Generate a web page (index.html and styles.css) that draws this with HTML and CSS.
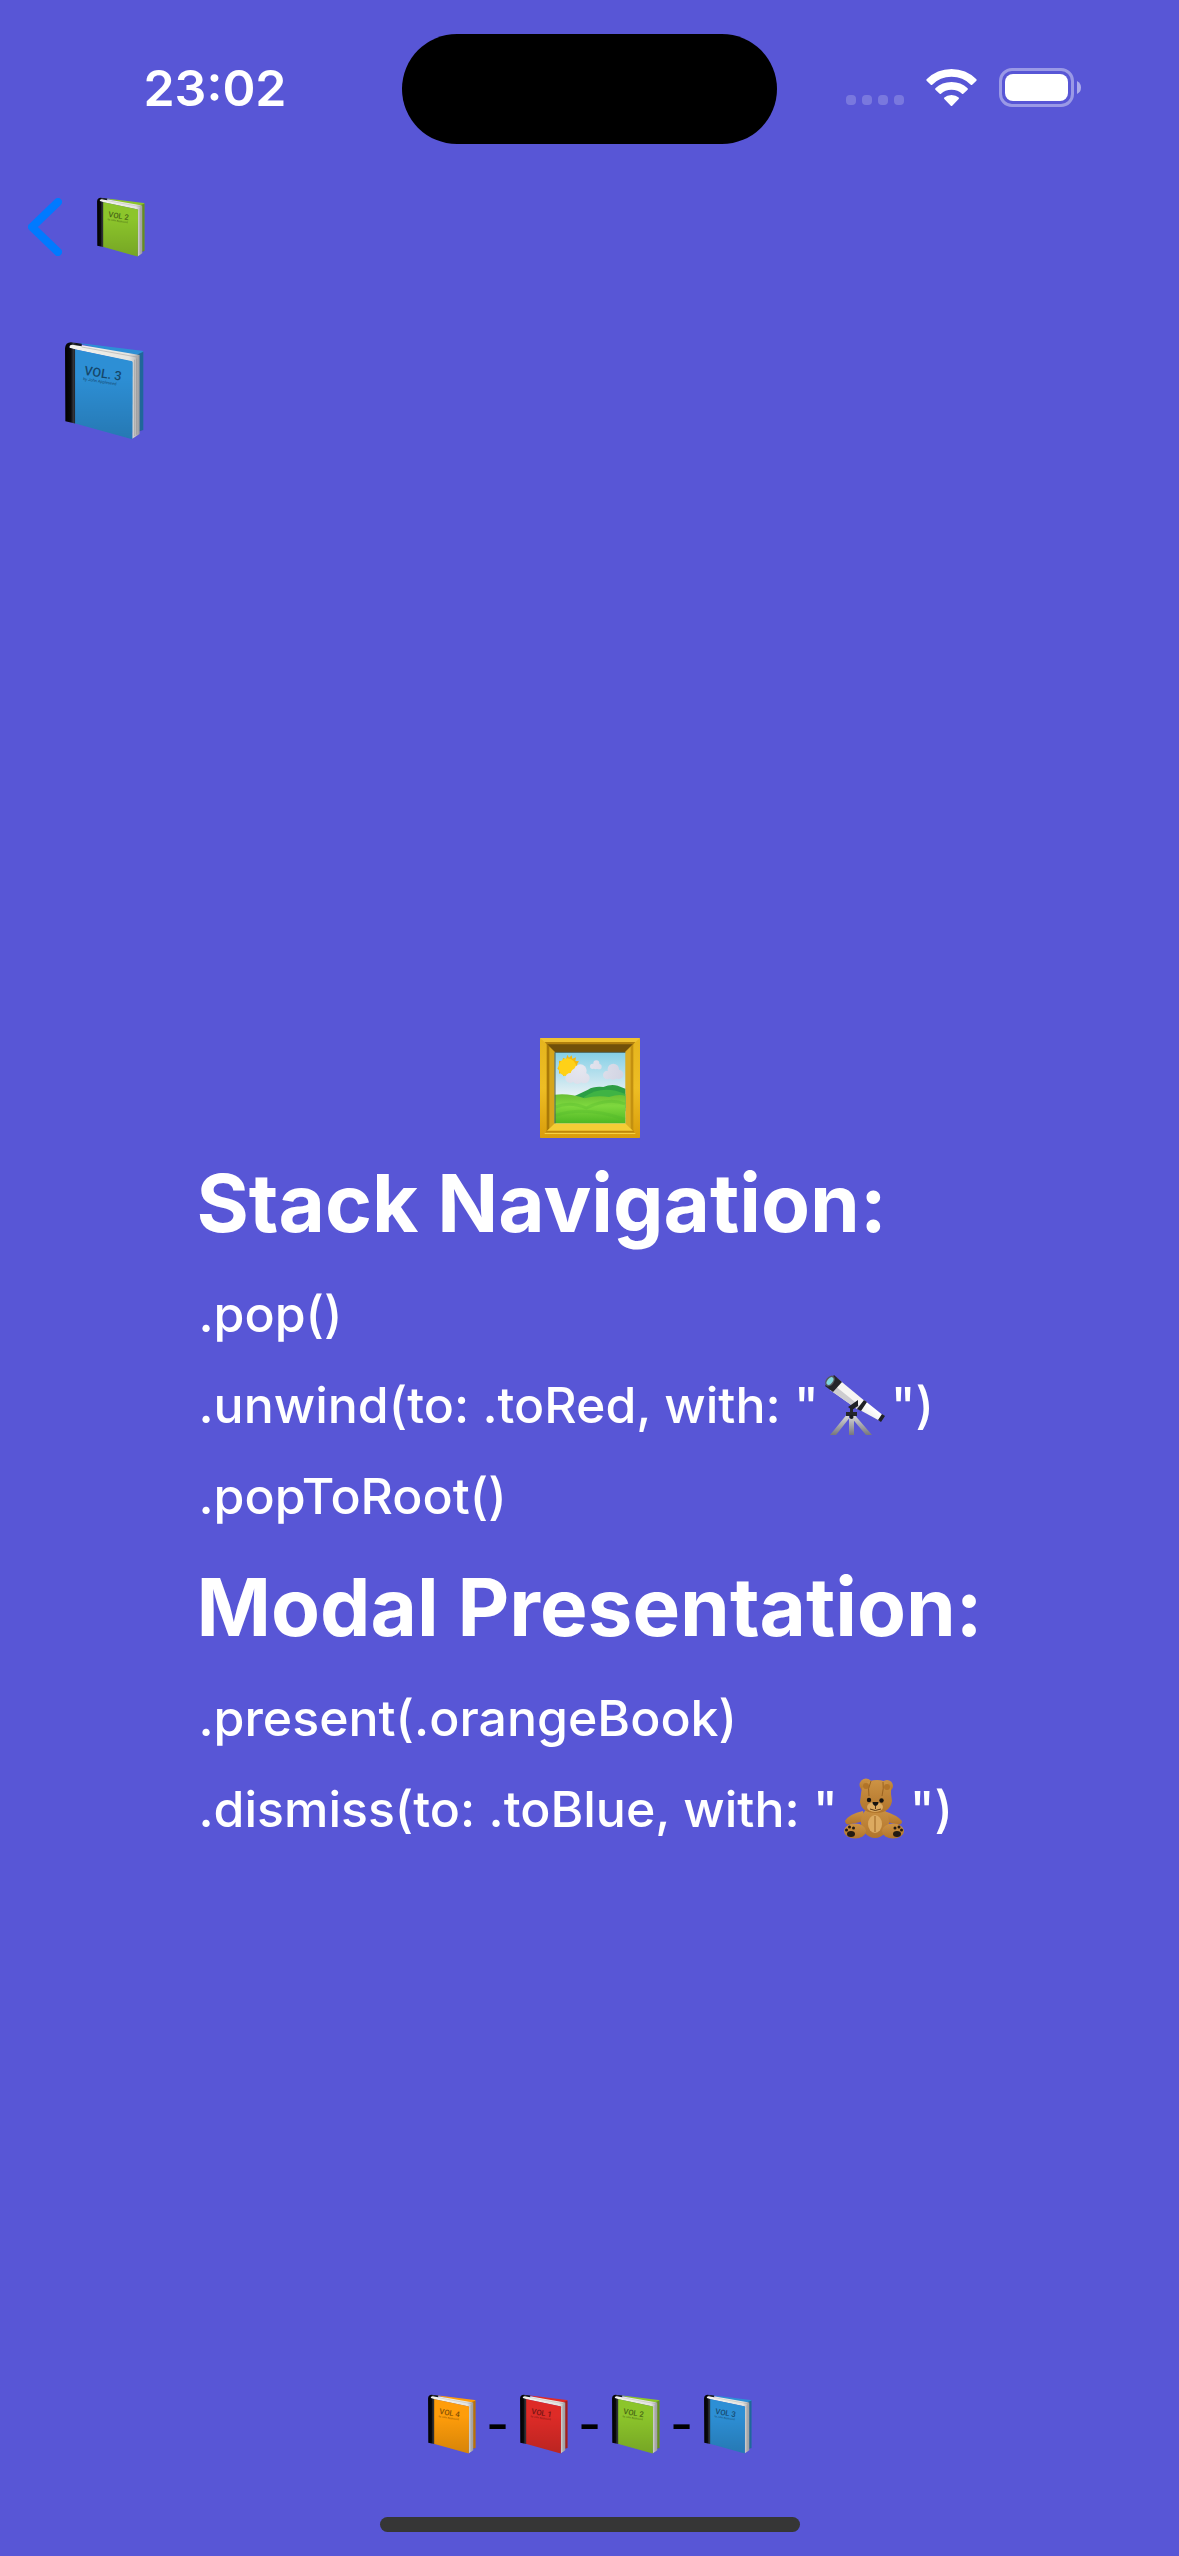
FILE: index.html
```html
<!DOCTYPE html>
<html lang="en">
<head>
<meta charset="utf-8">
<meta name="viewport" content="width=device-width, initial-scale=1">
<title>Blue Book</title>
<link rel="stylesheet" href="styles.css">
</head>
<body>
<svg class="defs" aria-hidden="true">
  <defs>
    <linearGradient id="pages" x1="0" y1="0" x2="1" y2="0"><stop offset="0" stop-color="#f4f4ee"/><stop offset=".85" stop-color="#e4e4e0"/><stop offset=".93" stop-color="#c6c6c6"/><stop offset="1" stop-color="#97979b"/></linearGradient>
    <linearGradient id="shade" x1="0" y1="0" x2="0" y2="1"><stop offset=".3" stop-color="#000" stop-opacity="0"/><stop offset="1" stop-color="#000" stop-opacity=".16"/></linearGradient>
    <linearGradient id="spine" x1="0" y1="0" x2="1" y2="0"><stop offset="0" stop-color="#000"/><stop offset=".35" stop-color="#0a0a0c"/><stop offset=".5" stop-color="#33363c"/><stop offset=".7" stop-color="#101216"/><stop offset="1" stop-color="#16202c"/></linearGradient>
    <symbol id="book" viewBox="0 0 236 296">
      <path d="M40 6 230 29q4 1 4 4v233l-34 6V50Z" fill="currentColor"/>
      <path d="M216 40 234 32v234l-18 6Z" fill="#000" opacity=".28"/>
      <path d="M14 12 26 8 223 42v236l-22 14V62L14 22Z" fill="url(#pages)"/>
      <path d="M50 18 215 48M208 56V284M214 52V280" fill="none" stroke="#777" stroke-width="2" opacity=".5"/>
      <path d="M28 25 198 60q4 1 4 5l-1 229L28 246Z" fill="currentColor"/>
      <path d="M28 25 198 60q4 1 4 5l-1 229L28 246Z" fill="url(#shade)"/>
      <path d="M0 22Q1 4 18 4L50 8v8L22 11q-11 1-9 9l17 5v222L1 240Z" fill="url(#spine)"/>
    </symbol>
  </defs>
</svg>

<header class="status">
  <time class="clock">23:02</time>
  <div class="island"></div>
  <div class="indicators">
    <svg class="signal" viewBox="0 0 58 10" aria-label="No signal"><g fill="#fff" opacity=".2"><rect width="10" height="10" rx="4"/><rect x="16" width="10" height="10" rx="4"/><rect x="32" width="10" height="10" rx="4"/><rect x="48" width="10" height="10" rx="4"/></g></svg>
    <svg class="wifi" viewBox="0 0 51 38" aria-label="Wi-Fi"><path fill="#fff" d="M.6 10.2Q11 0 25.500 0T50.400 10.200Q51 11 50.400 11.700L46.200 15.700Q45.500 16.300 44.800 15.700 37 7.800 25.500 7.800T6.200 15.700Q5.500 16.300 4.800 15.700L.6 11.700Q0 11 .6 10.200ZM9.400 19.300Q16 13 25.500 13T41.600 19.300Q42.200 20 41.600 20.700L37.300 24.800Q36.600 25.400 36 24.800 32 20.800 25.500 20.800T15 24.800Q14.400 25.400 13.700 24.800L9.400 20.700Q8.800 20 9.400 19.300ZM18.300 28.600Q21 26 25.500 26T32.700 28.600Q33.300 29.300 32.700 30L26.200 36.700Q25.500 37.400 24.800 36.700L18.300 30Q17.700 29.300 18.300 28.600Z"/></svg>
    <svg class="battery" viewBox="0 0 82 39" aria-label="Battery full"><rect x="1.500" y="1.500" width="72" height="36" rx="11.500" fill="none" stroke="#fff" stroke-opacity=".4" stroke-width="3"/><rect x="6" y="6" width="63" height="27" rx="8" fill="#fff"/><path d="M78 13q4 2 4 6.500T78 26Z" fill="#fff" opacity=".5"/></svg>
  </div>
</header>

<nav class="nav">
  <button class="back" type="button" aria-label="Back to green book">
    <svg class="chevron" viewBox="0 0 34 58"><path d="M30 4 4 29 30 54" fill="none" stroke="#007aff" stroke-width="8" stroke-linecap="round" stroke-linejoin="round"/></svg>
    <svg class="book green" viewBox="0 0 236 296"><use href="#book"/><g class="title" transform="translate(54 98) rotate(9)"><text class="vol">VOL 2</text><text class="by" y="16">by John Appleseed</text></g></svg>
  </button>
</nav>

<div class="volume">
  <svg class="book large blue" viewBox="0 0 236 296" role="img" aria-label="Blue book"><use href="#book"/><g class="title" transform="translate(56 101) rotate(9)"><text class="vol">VOL. 3</text><text class="by" y="16">by John Appleseed</text></g></svg>
</div>

<main class="content">
  <svg class="picture" viewBox="0 0 300 300" role="img" aria-label="Framed picture">
    <defs>
      <linearGradient id="sky" x1="0" y1="0" x2="0" y2="1"><stop offset="0" stop-color="#83cfe6"/><stop offset=".6" stop-color="#e6f0f4"/></linearGradient>
      <linearGradient id="grass" x1="0" y1="0" x2="0" y2="1"><stop offset="0" stop-color="#69bf35"/><stop offset=".4" stop-color="#7ed83e"/><stop offset="1" stop-color="#4fb824"/></linearGradient>
      <linearGradient id="gold" x1="0" y1="0" x2="0" y2="1"><stop offset="0" stop-color="#e5b41d"/><stop offset=".5" stop-color="#edbd24"/><stop offset="1" stop-color="#d99d0b"/></linearGradient>
      <radialGradient id="cloud" gradientUnits="userSpaceOnUse" cx="120" cy="85" r="240"><stop offset="0" stop-color="#e6e7f0"/><stop offset="1" stop-color="#c2c5d8"/></radialGradient>
    </defs>
    <rect width="300" height="300" rx="2" fill="url(#gold)"/>
    <path d="M0 0H300L278 20H22Z" fill="#efc132"/>
    <path d="M20 18H280L256 42H44Z" fill="#71500a"/>
    <path d="M14 12H286L280 19H20Z" fill="#b17f0d"/>
    <path d="M20 18 44 42V256L20 280Z" fill="#a97908"/>
    <path d="M280 18 256 42V256L280 280Z" fill="#c39010"/>
    <path d="M28 26 44 42V256L28 272Z" fill="#d6a51b"/>
    <path d="M272 26 256 42V256L272 272Z" fill="#dcae24"/>
    <path d="M44 256H256L280 280H20Z" fill="#f6cd35"/>
    <path d="M20 278H280L286 286H14Z" fill="#bf8809"/>
    <path d="M14 286H286" stroke="#ffdc4a" stroke-width="3"/>
    <rect x="44" y="42" width="212" height="214" fill="url(#sky)"/>
    <path d="M82 50l5 9 8-7 2 10 11-4-2 11 11 1-6 9 8 7-10 5 4 10-11-1-1 10-10-4-5 9-8-7-8 7-3-11-10 3V97l-5-6 5-6V68l10 2 2-11 9 5Z" fill="#f4b70c"/>
    <circle cx="82" cy="88" r="27" fill="#ffd117"/>
    <g fill="url(#cloud)"><circle cx="91" cy="120" r="15"/><circle cx="108" cy="107" r="16"/><circle cx="121" cy="98" r="19"/><circle cx="133" cy="120" r="16"/><circle cx="112" cy="123" r="15"/></g>
    <g fill="url(#cloud)"><circle cx="202" cy="111" r="13"/><circle cx="220" cy="94" r="17"/><circle cx="236" cy="109" r="14"/><circle cx="219" cy="112" r="13"/></g>
    <g fill="url(#cloud)"><circle cx="158" cy="85" r="8"/><circle cx="169" cy="76" r="9"/><circle cx="177" cy="86" r="8"/><circle cx="167" cy="87" r="7"/></g>
    <path d="M96 178 144 155Q162 144 190 147 213 137 233 143L256 152V220H96Z" fill="#2c9e45"/>
    <path d="M132 177Q188 138 256 168V210H132Z" fill="#3fb344"/>
    <path d="M44 170Q85 164 134 181 170 171 207 177 240 166 256 174V256H44Z" fill="url(#grass)"/>
    <path d="M46 207Q91 189 139 210 207 177 255 198M46 232Q136 202 255 244" fill="none" stroke="#4eb52c" stroke-width="9" opacity=".3"/>
    <path d="M45 256V43H256" fill="none" stroke="#4e5f50" stroke-width="3"/>
  </svg>

  <div class="actions">
    <h1 class="heading">Stack Navigation:</h1>
    <button class="action" type="button">.pop()</button>
    <button class="action" type="button">.unwind(to: .toRed, with: "<svg class="emoji" viewBox="0 0 66 62" role="img" aria-label="telescope"><defs><linearGradient id="tube" x1="1" y1="0" x2="0" y2="1"><stop offset="0" stop-color="#bbb"/><stop offset=".4" stop-color="#fff"/><stop offset="1" stop-color="#ddd"/></linearGradient><linearGradient id="leg" x1="0" y1="0" x2="0" y2="1"><stop offset="0" stop-color="#e3e3e6"/><stop offset="1" stop-color="#77777c"/></linearGradient></defs><path d="M26 39 8 61h6L29 42ZM31 39 50 61h-6L28 42ZM27 42h5v19h-5Z" fill="url(#leg)"/><path d="M24 38h11v4H24ZM28 32h3v8h-3Z" fill="#24252b"/><path d="M15 4 44 28 35 35 8 16Z" fill="#f6f5f3"/><path d="M8 16 35 35 38 32 12 11Z" fill="#cdccd0"/><path d="M42 26 62 42 58 47 36 35Z" fill="url(#tube)"/><path d="M12 1 20 8 11 18 3 12Z" fill="#24252a"/><ellipse cx="8" cy="7" rx="6" ry="4" transform="rotate(-53 8 7)" fill="#55595f"/><ellipse cx="8" cy="7" rx="4.500" ry="2.600" transform="rotate(-53 8 7)" fill="#83d5dc"/><path d="M42 26 45 28 39 37 35 35ZM60 40 63 42 59 48 56 46ZM26 33 36 26V32L30 36Z" fill="#202127"/><circle cx="29.500" cy="43" r="2" fill="#191a20"/></svg>")</button>
    <button class="action" type="button">.popToRoot()</button>
    <h1 class="heading">Modal Presentation:</h1>
    <button class="action" type="button">.present(.orangeBook)</button>
    <button class="action" type="button">.dismiss(to: .toBlue, with: "<svg class="emoji" viewBox="0 0 66 62" role="img" aria-label="teddy bear"><defs><linearGradient id="fur" x1="0" y1="0" x2="0" y2="1"><stop offset="0" stop-color="#cd9344"/><stop offset="1" stop-color="#b0742b"/></linearGradient></defs><g fill="url(#fur)"><circle cx="25" cy="7" r="6.500"/><circle cx="46" cy="8" r="6"/><path d="M22 33Q8 36 4 43q1 5 6 3l14-3ZM43 33Q56 37 61 43q0 5-6 3L41 43Z"/><ellipse cx="34" cy="44" rx="14" ry="16"/><ellipse cx="14" cy="53" rx="11" ry="7.500"/><ellipse cx="52" cy="53" rx="11" ry="7.500"/><path d="M20 16Q21 2 36 2t14 14l1 7Q49 35 35 35T19 24Z"/></g><g fill="#b27428"><circle cx="25" cy="8" r="3"/><circle cx="46" cy="9" r="3"/></g><ellipse cx="34" cy="46" rx="7" ry="9" fill="#dcaa60"/><ellipse cx="34" cy="29" rx="8" ry="5" fill="#dcab62"/><path d="M30 3Q26 11 28 18M42 4Q43 10 41 18M34 38V54" fill="none" stroke="#9a6220" stroke-width="1"/><g fill="#161310"><circle cx="28" cy="22" r="2.200"/><circle cx="40.500" cy="22.500" r="2.200"/><path d="M31.500 24h6q0 3-3 4Q31.500 27 31.500 24Z"/></g><path d="M34.500 28v3M29 31q5 3 11 0" fill="none" stroke="#5b3713"/><g fill="#241a11"><ellipse cx="10" cy="56" rx="4" ry="3"/><circle cx="5.500" cy="52" r="1.500"/><circle cx="8.500" cy="49" r="1.500"/><circle cx="12.500" cy="50" r="1.500"/><ellipse cx="56" cy="56" rx="4" ry="3"/><circle cx="54" cy="50" r="1.500"/><circle cx="58" cy="49" r="1.500"/><circle cx="60.500" cy="52" r="1.500"/></g></svg>")</button>
  </div>
</main>

<footer class="footer">
  <div class="path">
    <svg class="book orange" viewBox="0 0 236 296"><use href="#book"/><g class="title" transform="translate(54 98) rotate(9)"><text class="vol">VOL 4</text><text class="by" y="16">by John Appleseed</text></g></svg>
    <span class="dash">-</span>
    <svg class="book red" viewBox="0 0 236 296"><use href="#book"/><g class="title" transform="translate(54 98) rotate(9)"><text class="vol">VOL 1</text><text class="by" y="16">by John Appleseed</text></g></svg>
    <span class="dash">-</span>
    <svg class="book green" viewBox="0 0 236 296"><use href="#book"/><g class="title" transform="translate(54 98) rotate(9)"><text class="vol">VOL 2</text><text class="by" y="16">by John Appleseed</text></g></svg>
    <span class="dash">-</span>
    <svg class="book blue" viewBox="0 0 236 296"><use href="#book"/><g class="title" transform="translate(54 98) rotate(9)"><text class="vol">VOL 3</text><text class="by" y="16">by John Appleseed</text></g></svg>
  </div>
  <div class="home"></div>
</footer>
</body>
</html>
```
FILE: styles.css
```css
* { box-sizing: border-box; }

body {
  margin: 0;
  min-height: 100vh;
  display: flex;
  flex-direction: column;
  background: #5856d6;
  color: #fff;
  font-family: Inter, "Liberation Sans", sans-serif;
}

svg { display: block; flex: none; }
.defs { position: absolute; width: 0; height: 0; }

button {
  margin: 0;
  padding: 0;
  border: 0;
  background: none;
  color: inherit;
  font: inherit;
  text-align: left;
}

.status {
  display: grid;
  grid-template-columns: 1fr 375px 1fr;
  align-items: center;
  padding-top: 34px;
}
.clock {
  padding: 0 0 2px 28px;
  font-size: 50px;
  line-height: 60px;
  font-weight: 600;
  text-align: center;
}
.island { height: 110px; border-radius: 55px; background: #000; }
.indicators {
  display: flex;
  align-items: flex-end;
  justify-content: center;
  padding: 0 30px 3px 0;
}
.signal { width: 58px; height: 10px; margin: 0 22px 2px 0; }
.wifi { width: 51px; height: 38px; margin-right: 22px; }
.battery { width: 82px; height: 39px; }

.nav { padding: 53px 28px 0; }
.back { display: flex; align-items: center; gap: 35px; }
.chevron { width: 34px; height: 58px; }

.book { width: 48px; height: 60px; }
.book.large { width: 79px; height: 99px; }
.green { color: #8cc52b; }
.blue { color: #2d8fd5; }
.orange { color: #ff9d0a; }
.red { color: #de2b27; }
.title { fill: #000; opacity: .5; font-family: Roboto, sans-serif; }
.vol { font-size: 38px; font-weight: 500; }
.by { font-size: 12px; }

.volume { padding: 84px 65px 0; }

.content {
  flex: 1;
  display: flex;
  flex-direction: column;
  align-items: center;
  justify-content: center;
  padding-top: 58px;
}
.picture { width: 100px; height: 100px; }
.actions {
  display: flex;
  flex-direction: column;
  align-items: flex-start;
}
.heading {
  margin: 0;
  padding: 10px 0 11px;
  font-size: 80px;
  line-height: 110px;
  font-weight: 700;
}
.action {
  padding-left: 2px;
  font-size: 50px;
  line-height: 91px;
  font-weight: 500;
  white-space: nowrap;
}
.emoji {
  display: inline-block;
  width: 66px;
  height: 62px;
  margin: 0 3px;
  vertical-align: -13px;
}

.footer { display: flex; flex-direction: column; align-items: center; padding-bottom: 24px; }
.path { display: flex; align-items: center; }
.dash {
  width: 44px;
  color: #000;
  font-size: 50px;
  line-height: 60px;
  font-weight: 500;
  text-align: center;
}
.home {
  width: 420px;
  height: 15px;
  margin-top: 63px;
  border-radius: 8px;
  background: #363636;
}
```
